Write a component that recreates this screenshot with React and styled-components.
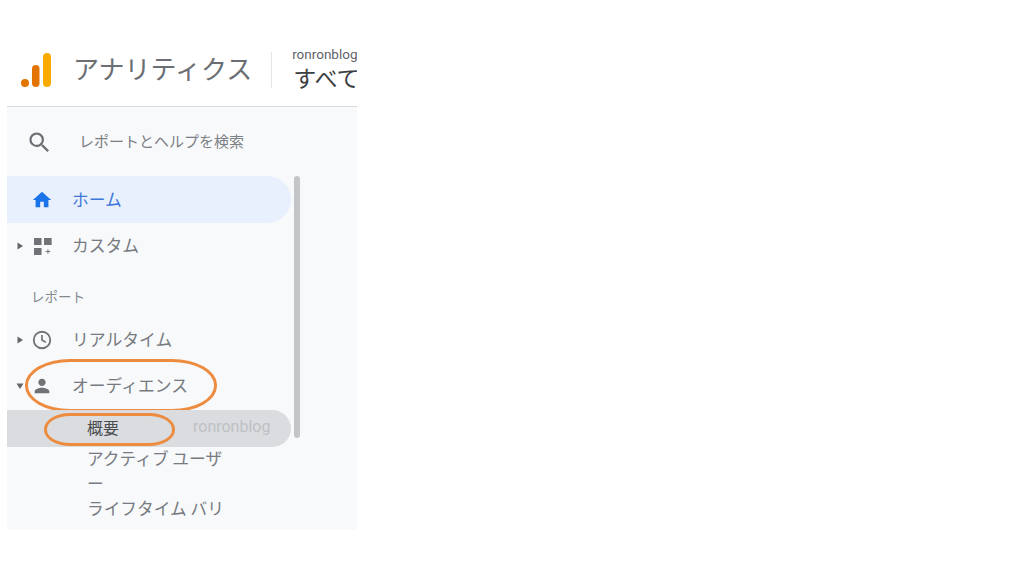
import React from "react";
import styled, { createGlobalStyle } from "styled-components";

const GlobalStyle = createGlobalStyle`
  html, body {
    margin: 0;
    padding: 0;
    background: #fff;
  }
  body {
    font-family: "Noto Sans CJK JP", "Noto Sans", sans-serif;
  }
`;

const Caret = ({ open }) => (
  <CaretBox viewBox="0 0 8 8" $open={open}>
    <path d="M1.5 0.5 L7 4 L1.5 7.5 Z" fill="#63666a" />
  </CaretBox>
);

export default function App() {
  return (
    <>
      <GlobalStyle />
      <Page>
        <Frame>
          <Header>
            <Logo viewBox="0 0 30 34">
              <circle cx="4" cy="30" r="4" fill="#e37400" />
              <rect x="11" y="12" width="7.5" height="22" rx="3.75" fill="#e37400" />
              <rect x="22" y="0" width="8" height="34" rx="4" fill="#f9ab00" />
            </Logo>
            <Title>アナリティクス</Title>
            <Account>
              <AccountName>ronronblog</AccountName>
              <AccountView>すべてのウェブサイトのデータ</AccountView>
            </Account>
          </Header>
          <Sidebar>
            <Search>
              <SearchIcon viewBox="0 0 24 24">
                <path
                  fill="#6c7074"
                  d="M15.5 14h-.79l-.28-.27A6.47 6.47 0 0 0 16 9.5 6.5 6.5 0 1 0 9.5 16c1.61 0 3.09-.59 4.23-1.57l.27.28v.79l5 4.99L20.49 19l-4.99-5zm-6 0C7.01 14 5 11.99 5 9.5S7.01 5 9.5 5 14 7.01 14 9.5 11.99 14 9.5 14z"
                />
              </SearchIcon>
              <SearchText>レポートとヘルプを検索</SearchText>
            </Search>
            <NavArea>
              <Nav>
                <Row $active $height={47}>
                  <span />
                  <NavIcon viewBox="0 0 24 24">
                    <path fill="#1a73e8" d="M10 20v-6h4v6h5v-8h3L12 3 2 12h3v8z" />
                  </NavIcon>
                  <Label $active>ホーム</Label>
                </Row>
                <Row $height={46}>
                  <Caret />
                  <NavIcon viewBox="0 0 24 24">
                    <path
                      fill="#6f7276"
                      d="M3.3 3.3h8.2v7.7H3.3zM14.2 3.3h8.3v7.7h-8.3zM3.3 14.2h8.2v7.6H3.3zM18 15.5h1v2h2v1h-2v2h-1v-2h-2v-1h2z"
                    />
                  </NavIcon>
                  <Label>カスタム</Label>
                </Row>
                <SectionLabel>レポート</SectionLabel>
                <Row $height={46}>
                  <Caret />
                  <NavIcon viewBox="0 0 24 24">
                    <circle cx="12" cy="12" r="9" fill="none" stroke="#6f7276" strokeWidth="2" />
                    <path d="M12 6.5V12l4.2 2.6" fill="none" stroke="#6f7276" strokeWidth="1.8" />
                  </NavIcon>
                  <Label>リアルタイム</Label>
                </Row>
                <Row $height={46}>
                  <Caret open />
                  <NavIcon viewBox="0 0 24 24">
                    <path
                      fill="#6f7276"
                      d="M12 12c2.21 0 4-1.79 4-4s-1.79-4-4-4-4 1.79-4 4 1.79 4 4 4zm0 2c-2.67 0-8 1.34-8 4v2h16v-2c0-2.66-5.33-4-8-4z"
                    />
                  </NavIcon>
                  <Label>オーディエンス</Label>
                  <AudienceRing />
                </Row>
                <SelectedItem>
                  <SubName>概要</SubName>
                  <Ghost>ronronblog</Ghost>
                  <SummaryRing />
                </SelectedItem>
                <SubList>
                  <SubItem>アクティブ ユーザー</SubItem>
                  <SubItem>ライフタイム バリュー</SubItem>
                </SubList>
              </Nav>
              <Scrollbar />
            </NavArea>
          </Sidebar>
        </Frame>
      </Page>
    </>
  );
}

const Page = styled.div`
  width: 1024px;
  height: 576px;
  padding-left: 7px;
  box-sizing: border-box;
  overflow: hidden;
`;
const Frame = styled.div`
  width: 350px;
  height: 530px;
  overflow: hidden;
  display: flex;
  flex-direction: column;
`;
const Header = styled.header`
  height: 107px;
  flex: none;
  box-sizing: border-box;
  padding: 34px 0 0 14px;
  display: flex;
  align-items: center;
  border-bottom: 1px solid #dadce0;
  background: #fff;
`;
const Logo = styled.svg`
  width: 30px;
  height: 34px;
  flex: none;
`;
const Title = styled.h1`
  margin: 0 0 4px 22px;
  font-size: 26px;
  font-weight: 400;
  line-height: 36px;
  color: #6b6f73;
  white-space: nowrap;
  flex: none;
`;
const Account = styled.div`
  margin-left: 19px;
  padding-left: 20px;
  height: 36px;
  border-left: 1px solid #e3e5e8;
  display: flex;
  flex-direction: column;
  white-space: nowrap;
  flex: none;
`;
const AccountName = styled.span`
  margin-top: -5px;
  font-family: "Roboto", sans-serif;
  font-size: 13.5px;
  line-height: 14px;
  color: #5f6368;
`;
const AccountView = styled.span`
  font-size: 23px;
  line-height: 32px;
  color: #3c4043;
  margin-left: 1px;
`;
const Sidebar = styled.div`
  flex: 1;
  background: #f8f9fb;
  display: flex;
  flex-direction: column;
  min-height: 0;
`;
const Search = styled.div`
  height: 69px;
  flex: none;
  display: flex;
  align-items: center;
  padding-left: 19px;
`;
const SearchIcon = styled.svg`
  width: 27px;
  height: 27px;
  flex: none;
  margin-top: 1px;
`;
const SearchText = styled.span`
  margin: 0 0 2px 26px;
  font-size: 15px;
  color: #7c8084;
`;
const NavArea = styled.div`
  flex: 1;
  display: flex;
  align-items: flex-start;
  min-height: 0;
`;
const Nav = styled.nav`
  width: 284px;
  height: 346px;
  flex: none;
  overflow: hidden;
`;
const Row = styled.div`
  position: relative;
  height: ${(p) => p.$height}px;
  box-sizing: border-box;
  padding-left: 9px;
  display: grid;
  grid-template-columns: 15px 22px 1fr;
  align-items: center;
  background: ${(p) => (p.$active ? "#e8f0fe" : "transparent")};
  border-radius: 0 24px 24px 0;
`;
const CaretBox = styled.svg`
  width: 8px;
  height: 8px;
  transform: ${(p) => (p.$open ? "rotate(90deg)" : "none")};
`;
const NavIcon = styled.svg`
  width: 22px;
  height: 22px;
`;
const Label = styled.span`
  margin: 0 0 2px 19px;
  font-size: 16.8px;
  color: ${(p) => (p.$active ? "#3f78d8" : "#777b80")};
  white-space: nowrap;
`;
const SectionLabel = styled.div`
  height: 48px;
  box-sizing: border-box;
  padding: 17px 0 0 24px;
  font-size: 13.5px;
  line-height: 20px;
  color: #85898d;
`;
const SelectedItem = styled.div`
  position: relative;
  height: 37px;
  box-sizing: border-box;
  margin-top: 1px;
  padding: 0 0 4px 80px;
  display: flex;
  align-items: center;
  background: #dadce0;
  border-radius: 0 19px 19px 0;
`;
const SubName = styled.span`
  font-size: 16px;
  color: #4a4d50;
  width: 106px;
  flex: none;
`;
const Ghost = styled.span`
  font-family: "Roboto", sans-serif;
  font-size: 16px;
  color: #bfc1c4;
`;
const SubList = styled.div`
  margin: -1px 0 0 80px;
  width: 140px;
`;
const SubItem = styled.div`
  font-size: 16.7px;
  line-height: 25px;
  color: #777b80;
`;
const Scrollbar = styled.div`
  width: 6px;
  height: 262px;
  margin-left: 3px;
  flex: none;
  background: #c4c5c8;
  border-radius: 3px;
`;
const AudienceRing = styled.div`
  position: absolute;
  left: 18px;
  top: -4px;
  width: 192px;
  height: 53px;
  box-sizing: border-box;
  border: 3px solid #ed8b3f;
  border-radius: 45px / 26px;
`;
const SummaryRing = styled.div`
  position: absolute;
  left: 37px;
  top: 3px;
  width: 131px;
  height: 33px;
  box-sizing: border-box;
  border: 3px solid #ed8b3f;
  border-radius: 26px / 16px;
`;
